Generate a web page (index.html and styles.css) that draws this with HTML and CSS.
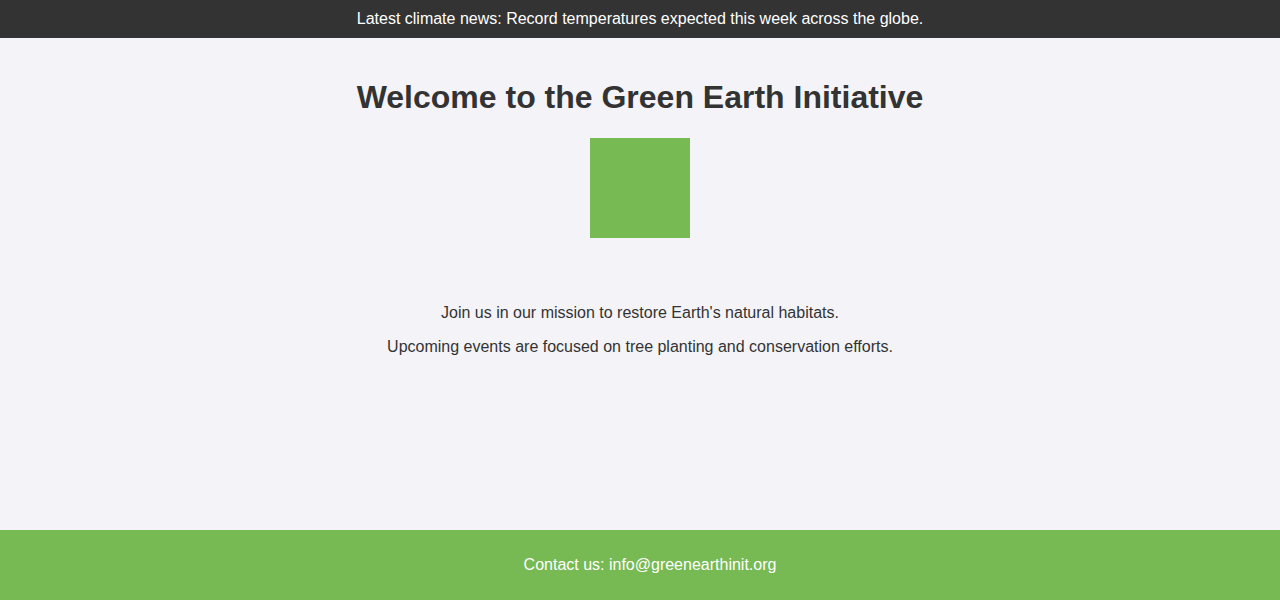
FILE: index.html
```html
<!DOCTYPE html>
<html lang="en">
<head>
<meta charset="utf-8">
<title>Green Earth Initiative</title>
<link rel="stylesheet" href="styles.css">
</head>
<body>
<header class="news-bar">Latest climate news: Record temperatures expected this week across the globe.</header>
<main class="content">
  <h1 class="title">Welcome to the Green Earth Initiative</h1>
  <div class="logo-box"></div>
  <div class="intro">
    <p>Join us in our mission to restore Earth's natural habitats.</p>
    <p>Upcoming events are focused on tree planting and conservation efforts.</p>
  </div>
</main>
<footer class="site-footer">Contact us: <a class="mail" href="mailto:info@greenearthinit.org">info@greenearthinit.org</a></footer>
</body>
</html>
```
FILE: styles.css
```css
* { box-sizing: border-box; }
html, body { margin: 0; padding: 0; }
body {
  font-family: "Liberation Sans", Arial, sans-serif;
  background: #f4f4f8;
  color: #333333;
  min-height: 100vh;
  display: flex;
  flex-direction: column;
}
.news-bar {
  background: #333333;
  color: #ffffff;
  text-align: center;
  font-size: 16px;
  height: 38px;
  line-height: 18px;
  padding: 10px;
}
.content {
  flex: 1;
  display: flex;
  flex-direction: column;
  align-items: center;
  padding: 41px 20px 0;
}
.title {
  margin: 0 0 22px;
  font-size: 32px;
  font-weight: bold;
  line-height: 37px;
  text-align: center;
}
.logo-box {
  width: 100px;
  height: 100px;
  background: #77b952;
}
.intro {
  margin-top: 50px;
  text-align: center;
}
.intro p {
  margin: 16px 0;
  font-size: 16px;
  line-height: 18px;
}
.site-footer {
  background: #77b952;
  color: #ffffff;
  text-align: center;
  font-size: 16px;
  line-height: 18px;
  height: 70px;
  padding: 26px 0 26px 20px;
}
.mail {
  color: #ffffff;
  text-decoration: none;
}
```
